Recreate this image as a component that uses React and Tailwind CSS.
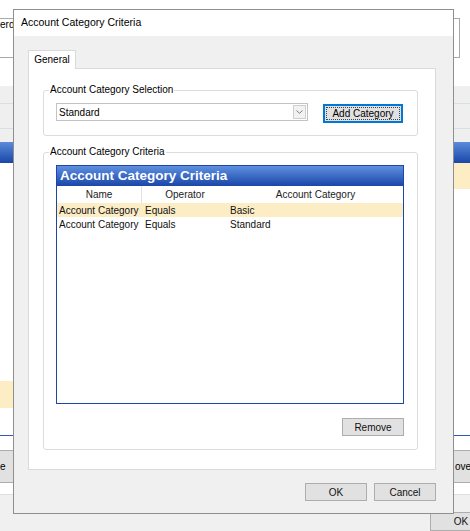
import React from 'react';

const criteria = [
  { name: 'Account Category', operator: 'Equals', value: 'Basic', selected: true },
  { name: 'Account Category', operator: 'Equals', value: 'Standard', selected: false },
];

function WinButton({ children, className = '' }) {
  return (
    <div className={`flex items-center justify-center border border-[#adadad] bg-[#e1e1e1] text-[10px] text-[#111] ${className}`}>
      {children}
    </div>
  );
}

function Background() {
  return (
    <div className="flex h-full flex-col bg-white">
      <div className="h-[18px]" />
      {/* search box behind the dialog */}
      <div className="h-[40px] w-[460px] border-y border-r border-[#a8a8a8] text-[10px] leading-[11px]">
        <span>erd</span>
      </div>
      <div className="h-[28px]" />
      <div className="h-[18px] border-b border-[#d6dee6] bg-[#efefef]" />
      <div className="h-[25px] border-b border-[#d6dee6] bg-[#efefef]" />
      <div className="h-[13px] bg-[#efefef]" />
      <div className="h-[21px] bg-linear-to-b from-[#5b8bdb] to-[#1a46a7]" />
      <div className="flex h-[272px]">
        <div className="flex w-[235px] flex-col">
          <div className="h-[218px]" />
          <div className="h-[27px] bg-[#fdedc5]" />
        </div>
        <div className="flex flex-1 flex-col">
          <div className="h-[26px] bg-[#fdedc5]" />
        </div>
      </div>
      <div className="h-px bg-[#3558b5]" />
      <div className="h-[14px]" />
      <div className="flex h-[33px] justify-between">
        <div className="flex w-[14px] items-center overflow-hidden border-y border-r border-[#adadad] bg-[#e1e1e1] text-[10px]">
          <span>e</span>
        </div>
        <div className="flex w-[17px] items-center overflow-hidden border-y border-l border-[#adadad] bg-[#e1e1e1] text-[10px]">
          <span className="ml-[1px]">ove</span>
        </div>
      </div>
      <div className="h-[12px] border-b border-[#dbe0e5]" />
      <div className="flex flex-1 items-start justify-end bg-[#f0f0f0] pt-[17px]">
        <WinButton className="mr-[-22px] h-[19px] w-[62px]">OK</WinButton>
      </div>
    </div>
  );
}

function CriteriaGrid() {
  return (
    <div className="mt-[7px] flex h-[239px] w-[348px] flex-col border border-[#1f46a6] bg-white">
      <div className="h-[20px] bg-linear-to-b from-[#5e90e1] to-[#1b46a8] pl-[3px] text-[13.5px] font-bold leading-[20px] text-white">
        Account Category Criteria
      </div>
      <div className="flex h-[17px] items-center text-[10px] text-[#222]">
        <div className="h-full w-[85px] border-r border-[#e2e2e2] text-center leading-[17px]">Name</div>
        <div className="w-[86px] text-center">Operator</div>
        <div className="flex-1 text-center">Account Category</div>
      </div>
      {criteria.map((row, i) => (
        <div
          key={i}
          className={`flex h-[14px] items-center text-[10px] text-[#111] ${row.selected ? 'bg-[#fdedc5]' : ''}`}
        >
          <div className="w-[85px] pl-[2px]">{row.name}</div>
          <div className="w-[86px] pl-[3px]">{row.operator}</div>
          <div className="flex-1 pl-[2px]">{row.value}</div>
        </div>
      ))}
    </div>
  );
}

export default function App() {
  return (
    <div className="relative h-[531px] w-[470px] overflow-hidden font-['Liberation_Sans',Arial,sans-serif] text-black">
      <Background />

      {/* dialog */}
      <div className="absolute left-[13px] top-[9px] flex h-[505px] w-[441px] flex-col border border-[#8f8f8f] bg-[#f0f0f0]">
        <div className="flex h-[26px] items-center bg-white pl-[7px] text-[10.5px]">Account Category Criteria</div>

        <div className="flex flex-1 flex-col px-[14px] pt-[14px]">
          {/* tab */}
          <div className="relative z-10 -mb-px flex h-[19px] w-[48px] items-center justify-center border-x border-t border-[#d9d9d9] bg-white pb-[1px] text-[10px]">
            General
          </div>
          <div className="h-[402px] w-[408px] border border-[#d9d9d9] bg-white px-[14px]">
            <fieldset className="mt-[15px] w-[375px] rounded-[3px] border border-[#dcdcdc] px-[12px] pb-[12px]">
              <legend className="ml-[-7px] px-[1px] text-[10px] leading-[12px]">Account Category Selection</legend>
              <div className="mt-[7px] flex items-start">
                <div className="flex h-[18px] w-[252px] items-center border border-[#c3c3c3] bg-white pl-[2px] text-[10px]">
                  <span>Standard</span>
                  <div className="ml-auto mr-[1px] flex h-[14px] w-[13px] items-center justify-center border border-[#cfcfcf] bg-[#f2f2f2]">
                    <svg width="7" height="4" viewBox="0 0 7 4" fill="none">
                      <path d="M0.5 0.5 L3.5 3.3 L6.5 0.5" stroke="#7a7a7a" strokeWidth="1" />
                    </svg>
                  </div>
                </div>
                <div className="ml-[15px] mt-[1px] h-[19px] w-[80px] border-2 border-[#0078d7] bg-[#e1e1e1] p-[1px]">
                  <div className="flex h-full items-center justify-center border border-dotted border-[#444] text-[10px]">
                    Add Category
                  </div>
                </div>
              </div>
            </fieldset>

            <fieldset className="mt-[10px] w-[375px] rounded-[3px] border border-[#dcdcdc] px-[12px] pb-[13px]">
              <legend className="ml-[-7px] px-[1px] text-[10px] leading-[12px]">Account Category Criteria</legend>
              <CriteriaGrid />
              <div className="mt-[14px] flex w-[348px] justify-end">
                <WinButton className="h-[18px] w-[62px]">Remove</WinButton>
              </div>
            </fieldset>
          </div>

          <div className="mt-[13px] flex w-[408px] justify-end gap-[7px]">
            <WinButton className="h-[18px] w-[62px]">OK</WinButton>
            <WinButton className="h-[18px] w-[62px]">Cancel</WinButton>
          </div>
        </div>
      </div>
    </div>
  );
}
